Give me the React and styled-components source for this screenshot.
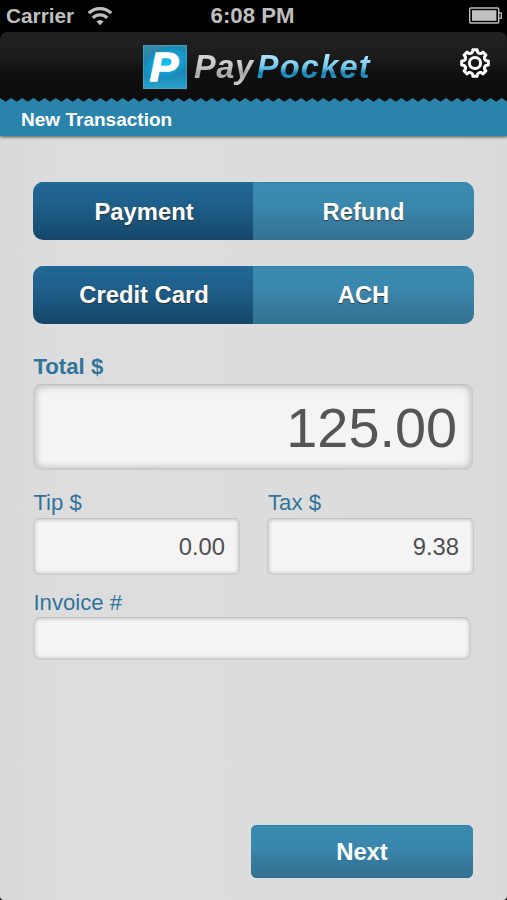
import React, { useState } from 'react';
import styled, { createGlobalStyle, css } from 'styled-components';

const GlobalStyle = createGlobalStyle`
  * {
    box-sizing: border-box;
  }

  body {
    margin: 0;
    background: #000;
    font-family: 'Liberation Sans', Arial, sans-serif;
  }
`;

const Screen = styled.div`
  display: flex;
  flex-direction: column;
  width: 507px;
  height: 900px;
  overflow: hidden;
  background: #000;
`;

const StatusBar = styled.div`
  display: grid;
  grid-template-columns: 1fr auto 1fr;
  align-items: center;
  height: 32px;
  padding: 0 5px 0 6px;
  color: #bfbfbf;
  font-weight: bold;
`;

const Carrier = styled.div`
  display: flex;
  align-items: center;
  gap: 13px;
  font-size: 20.8px;
`;

const Clock = styled.div`
  padding-right: 3px;
  font-size: 22.2px;
  line-height: 30px;
`;

const BatteryIcon = styled.svg`
  justify-self: end;
  margin-bottom: 2px;
`;

const Header = styled.header`
  display: grid;
  grid-template-columns: 1fr auto 1fr;
  align-items: center;
  height: 70px;
  padding: 0 16px;
  border-radius: 7px 7px 0 0;
  background: linear-gradient(#222 0, #1c1c1c 35%, #0f0f0f 60%, #0d0d0d 100%);
`;

const Logo = styled.div`
  display: flex;
  align-items: center;
  grid-column: 2;
  width: 221px;
  margin-top: -1px;
`;

const Mark = styled.svg`
  flex: none;
`;

const Wordmark = styled.div`
  display: flex;
  margin-left: 7px;
  font-size: 32.6px;
  font-weight: bold;
  font-style: italic;
  line-height: 40px;
`;

const Word = styled.span`
  flex-shrink: 0;
  padding-right: 3px;
  letter-spacing: ${(props) => (props.$blue ? '1.2px' : '0.6px')};
  color: transparent;
  background: ${(props) =>
    props.$blue
      ? 'linear-gradient(#a5e3fb 25%, #6ec6ea 50%, #1583b5 66%, #3ba7d3 85%)'
      : 'linear-gradient(#d4d4d4 25%, #c4c4c4 50%, #a6a6a6 66%, #c9c9c9 90%)'};
  background-clip: text;
  -webkit-background-clip: text;
`;

const SettingsButton = styled.button`
  display: flex;
  justify-self: end;
  padding: 0;
  margin-top: -8px;
  border: 0;
  background: none;
  cursor: pointer;
`;

const TitleBar = styled.div`
  position: relative;
  display: flex;
  align-items: center;
  height: 34px;
  padding: 2px 21px 0;
  color: #fff;
  font-size: 19.05px;
  font-weight: bold;
  background: #2a83ab;
  box-shadow: 0 1px 3px rgba(0, 0, 0, 0.65);
`;

// sits over the bottom edge of the header
const Teeth = styled.svg`
  position: absolute;
  left: 0;
  bottom: 100%;
`;

const Content = styled.main`
  flex: 1;
  display: flex;
  flex-direction: column;
  padding: 46px 33px 22px;
  border-radius: 0 0 4px 4px;
  background: linear-gradient(90deg, #d9d9d9 0, #dddddd 12%, #dcdcdc 88%, #dadada 100%);
`;

const buttonText = css`
  color: #fff;
  font-family: inherit;
  font-size: 23.8px;
  font-weight: bold;
  text-shadow: 0 1px 1px rgba(50, 40, 30, 0.8);
`;

const Segments = styled.div`
  display: flex;
  height: 58px;
  margin-bottom: 26px;
  border-radius: 10px;
  overflow: hidden;
`;

const Segment = styled.button`
  ${buttonText}
  width: ${(props) => (props.$active ? '220px' : '221px')};
  flex: 1 1 auto;
  padding: ${(props) => (props.$raised ? '0 0 1px' : '2px 0 0')};
  padding-left: ${(props) => (props.$active ? '2px' : '0')};
  border: 0;
  background: ${(props) =>
    props.$active
      ? 'linear-gradient(#226795 0, #1f608c 35%, #1a557c 65%, #15466a 100%)'
      : 'linear-gradient(#3b8bb1 0, #3a87ac 45%, #377c9f 65%, #337292 100%)'};
  box-shadow: inset 0 1px 0 ${(props) => (props.$active ? '#1d6d99' : '#2f87b0')};
`;

const Field = styled.label`
  display: flex;
  flex-direction: column;
  width: ${(props) => props.$width};
  margin-top: ${(props) => props.$top || '0'};
`;

const Label = styled.span`
  height: ${(props) => props.$height || '29px'};
  padding-top: ${(props) => (props.$bold ? '1px' : '0')};
  padding-left: ${(props) => props.$indent || '0.4px'};
  color: #30749c;
  font-size: 22.2px;
  font-weight: ${(props) => (props.$bold ? 'bold' : 'normal')};
  line-height: 26px;
`;

const Input = styled.input`
  width: 100%;
  height: ${(props) => (props.$large ? '86px' : '57px')};
  padding: 0 14px;
  border: 1px solid #c9c9c9;
  border-top-color: #c0c0c0;
  border-radius: 5px;
  outline: 0;
  color: #4f4f4f;
  font-family: inherit;
  font-size: 23.8px;
  text-align: right;
  background: #f4f4f4;
  box-shadow: inset 0 0 4px rgba(0, 0, 0, 0.3);

  ${(props) =>
    props.$large &&
    css`
      padding: 1px 15px 0;
      border-radius: 8px;
      color: #555;
      font-size: 55.8px;
      box-shadow: inset 0 0 8px rgba(0, 0, 0, 0.33);
    `}

  ${(props) =>
    props.$short &&
    css`
      height: 43px;
      border-radius: 7px;
      text-align: left;
    `}
`;

const Row = styled.div`
  display: flex;
  justify-content: space-between;
  margin-top: 20px;
`;

const NextButton = styled.button`
  ${buttonText}
  align-self: flex-end;
  width: 222px;
  height: 53px;
  padding: 1px 0 0;
  margin: auto 1px 0 0;
  border: 0;
  border-radius: 6px;
  text-shadow: none;
  background: linear-gradient(#3a8bb1 0, #3986ad 45%, #367b9e 65%, #337291 100%);
  box-shadow: inset 0 1px 0 #2b81a8, inset 0 -1px 0 #2d6c8c;
`;

const WifiIcon = () => (
  <svg width="26" height="20" viewBox="0 0 26 20" fill="none" stroke="#bfbfbf">
    <path d="M1.8 7.2a15.8 15.8 0 0 1 22.4 0" strokeWidth="3.3" />
    <path d="M5.8 11.9a10.2 10.2 0 0 1 14.4 0" strokeWidth="3.3" />
    <path d="M13 19.2l-3.6-3.6a5 5 0 0 1 7.2 0z" fill="#bfbfbf" stroke="none" />
  </svg>
);

const Battery = () => (
  <BatteryIcon width="34" height="17" viewBox="0 0 34 17">
    <rect x="1.7" y="1" width="29" height="15" rx="1" fill="none" stroke="#bfbfbf" strokeWidth="1.4" />
    <rect x="4" y="3.2" width="24.4" height="10.6" fill="#bfbfbf" />
    <path d="M31 5.8h2.3v5.4H31" fill="none" stroke="#bfbfbf" strokeWidth="1.3" />
  </BatteryIcon>
);

const LogoMark = () => (
  <Mark width="44" height="44" viewBox="0 0 44 44">
    <defs>
      <linearGradient id="mark" x1="0" y1="0" x2="0" y2="1">
        <stop offset="0" stopColor="#368ca9" />
        <stop offset="0.5" stopColor="#167eab" />
        <stop offset="1" stopColor="#27a2cc" />
      </linearGradient>
      <radialGradient id="glow">
        <stop offset="0" stopColor="#10c7f4" />
        <stop offset="0.4" stopColor="#12a9dc" />
        <stop offset="1" stopColor="#1a8ab8" />
      </radialGradient>
      <clipPath id="square">
        <rect width="44" height="44" />
      </clipPath>
    </defs>
    <g clipPath="url(#square)">
      <rect width="44" height="44" fill="url(#mark)" />
      <ellipse cx="24" cy="18" rx="25" ry="15" fill="url(#glow)" transform="rotate(-22 24 18)" />
      <rect x="0.5" y="0.5" width="43" height="43" fill="none" stroke="#5cabc4" strokeOpacity="0.5" />
    </g>
    <text
      transform="translate(6.7 36) scale(1.03 1)"
      fontFamily="Liberation Sans, Arial, sans-serif"
      fontSize="41.5"
      fontWeight="bold"
      fontStyle="italic"
      fill="#fff"
      stroke="#fff"
      strokeWidth="1.5"
    >
      P
    </text>
  </Mark>
);

const polar = (radius, degrees) => {
  const angle = (degrees * Math.PI) / 180;
  return `${(16 + radius * Math.cos(angle)).toFixed(2)} ${(16 + radius * Math.sin(angle)).toFixed(2)}`;
};

// eight flat teeth with rounded dips between them
const gearPath =
  [0, 45, 90, 135, 180, 225, 270, 315]
    .map((a, i) =>
      `${i === 0 ? 'M' : 'L'}${polar(11.4, a - 12)} L${polar(13.5, a - 9)} L${polar(13.5, a + 9)} ` +
      `L${polar(11.4, a + 12)} Q${polar(9.6, a + 22.5)} ${polar(11.4, a + 33)}`
    )
    .join(' ') + 'Z';

const GearIcon = () => (
  <svg width="32" height="32" viewBox="0 0 32 32" fill="none" stroke="#fff" strokeLinejoin="round">
    <path d={gearPath} strokeWidth="3" />
    <circle cx="16" cy="16" r="5.6" strokeWidth="3" />
  </svg>
);

const TOOTH = 11.15;
const teethPath =
  'M0 4' +
  Array.from({ length: 47 }, (_, i) => ` L${(i * TOOTH).toFixed(2)} 0 L${((i + 0.5) * TOOTH).toFixed(2)} 3.8`).join('') +
  ' V4Z';

const Toggle = ({ options, value, onChange, raised }) => (
  <Segments>
    {options.map((option) => (
      <Segment key={option} $active={option === value} $raised={raised} onClick={() => onChange(option)}>
        {option}
      </Segment>
    ))}
  </Segments>
);

const App = () => {
  const [type, setType] = useState('Payment');
  const [method, setMethod] = useState('Credit Card');
  const [total, setTotal] = useState('125.00');
  const [tip, setTip] = useState('0.00');
  const [tax, setTax] = useState('9.38');
  const [invoice, setInvoice] = useState('');

  return (
    <>
      <GlobalStyle />
      <Screen>
        <StatusBar>
          <Carrier>
            Carrier
            <WifiIcon />
          </Carrier>
          <Clock>6:08 PM</Clock>
          <Battery />
        </StatusBar>
        <Header>
          <Logo>
            <LogoMark />
            <Wordmark>
              <Word>Pay</Word>
              <Word $blue>Pocket</Word>
            </Wordmark>
          </Logo>
          <SettingsButton aria-label="Settings">
            <GearIcon />
          </SettingsButton>
        </Header>
        <TitleBar>
          <Teeth width="507" height="4" viewBox="0 0 507 4">
            <path d={teethPath} fill="#2a83ab" />
          </Teeth>
          New Transaction
        </TitleBar>
        <Content>
          <Toggle options={['Payment', 'Refund']} value={type} onChange={setType} />
          <Toggle options={['Credit Card', 'ACH']} value={method} onChange={setMethod} raised />
          <Field $width="440px" $top="3px">
            <Label $bold $height="31px">Total $</Label>
            <Input $large value={total} onChange={(e) => setTotal(e.target.value)} />
          </Field>
          <Row>
            <Field $width="207px">
              <Label $height="28px">Tip $</Label>
              <Input value={tip} onChange={(e) => setTip(e.target.value)} />
            </Field>
            <Field $width="207px">
              <Label $height="28px" $indent="1px">Tax $</Label>
              <Input value={tax} onChange={(e) => setTax(e.target.value)} />
            </Field>
          </Row>
          <Field $width="438px" $top="15px">
            <Label $height="27px">Invoice #</Label>
            <Input $short value={invoice} onChange={(e) => setInvoice(e.target.value)} />
          </Field>
          <NextButton>Next</NextButton>
        </Content>
      </Screen>
    </>
  );
};

export default App;
